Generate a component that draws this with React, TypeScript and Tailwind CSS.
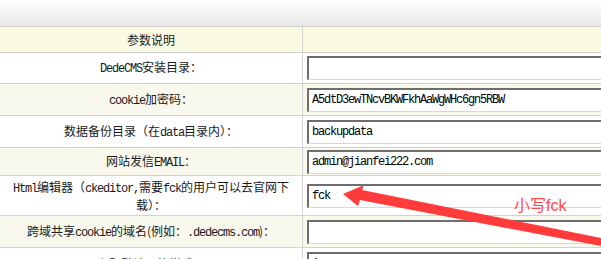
import React from "react";

type Row = {
	label: React.ReactNode;
	value?: string;
	h: string;
	alt: boolean;
};

// SimSun-like half width latin
const M = ({ children }: { children: React.ReactNode }) => (
	<span className="tracking-[-1.2px] font-['Liberation_Mono','Noto_Sans_CJK_SC',monospace]">{children}</span>
);

const rows: Row[] = [
	{ label: <><M>DedeCMS</M>安装目录：</>, value: "", h: "h-[30px]", alt: false },
	{ label: <><M>cookie</M>加密码：</>, value: "A5dtD3ewTNcvBKWFkhAaWgWHc6gn5RBW", h: "h-[31px]", alt: true },
	{ label: <>数据备份目录（在<M>data</M>目录内）：</>, value: "backupdata", h: "h-[31px]", alt: false },
	{ label: <>网站发信<M>EMAIL</M>：</>, value: "admin@jianfei222.com", h: "h-[27px]", alt: true },
	{
		label: (
			<>
				<M>Html</M>编辑器（<M>ckeditor,</M>需要<M>fck</M>的用户可以去官网下
				<br />
				载）：
			</>
		),
		value: "fck",
		h: "h-[39px]",
		alt: false,
	},
	{ label: <>跨域共享<M>cookie</M>的域名(例如：<M>.dedecms.com</M>)：</>, value: "", h: "h-[31px]", alt: true },
	{ label: <>主题默认风格样式：</>, value: "1", h: "h-[31px]", alt: false },
];

export default function App() {
	return (
		<div className="relative w-full h-[259px] overflow-hidden bg-white text-[12px] leading-[16px] text-[#1a1a1a] font-['Noto_Sans_CJK_SC',sans-serif]">
			<div className="h-[27px] border-b border-[#cfcfcf] bg-gradient-to-b from-white to-[#e8e8e8]" />
			<div className="flex h-[26px] border-b border-[#d2d2d2] bg-[#fafae3]">
				<div className="w-[303px] border-r border-[#d2d2d2] flex items-center justify-center">参数说明</div>
				<div className="flex-1" />
			</div>
			{rows.map((r, i) => (
				<div key={i} className={`flex ${r.h} box-content border-b border-[#d2d2d2] ${r.alt ? "bg-[#f8f8ed]" : "bg-white"}`}>
					<div className="w-[303px] shrink-0 border-r border-[#d2d2d2] flex items-center justify-center text-center">
						<div>{r.label}</div>
					</div>
					<div className="flex-1 flex items-center pl-[4px]">
						<div className="w-[320px] shrink-0 h-[24px] bg-white border-t-2 border-l-2 border-b border-r border-t-[#6e6e6e] border-l-[#6e6e6e] border-b-[#d8d8d8] border-r-[#d8d8d8] flex items-center pl-[3px] text-[12px] text-black">
							<M>{r.value}</M>
						</div>
					</div>
				</div>
			))}
			<svg className="absolute left-0 top-0 pointer-events-none" width="601" height="259" viewBox="0 0 601 259">
				<polygon
					points="343,194 364,185 362,190 601,238 601,246 360,200 358,206"
					fill="#ff3b3b"
				/>
			</svg>
			<div className="absolute left-[514px] top-[194px] text-[16px] leading-[20px] text-[#ff4a4a] font-['Noto_Sans_CJK_SC',sans-serif]">
				小写<span className="font-['Liberation_Sans',sans-serif]">fck</span>
			</div>
		</div>
	);
}
